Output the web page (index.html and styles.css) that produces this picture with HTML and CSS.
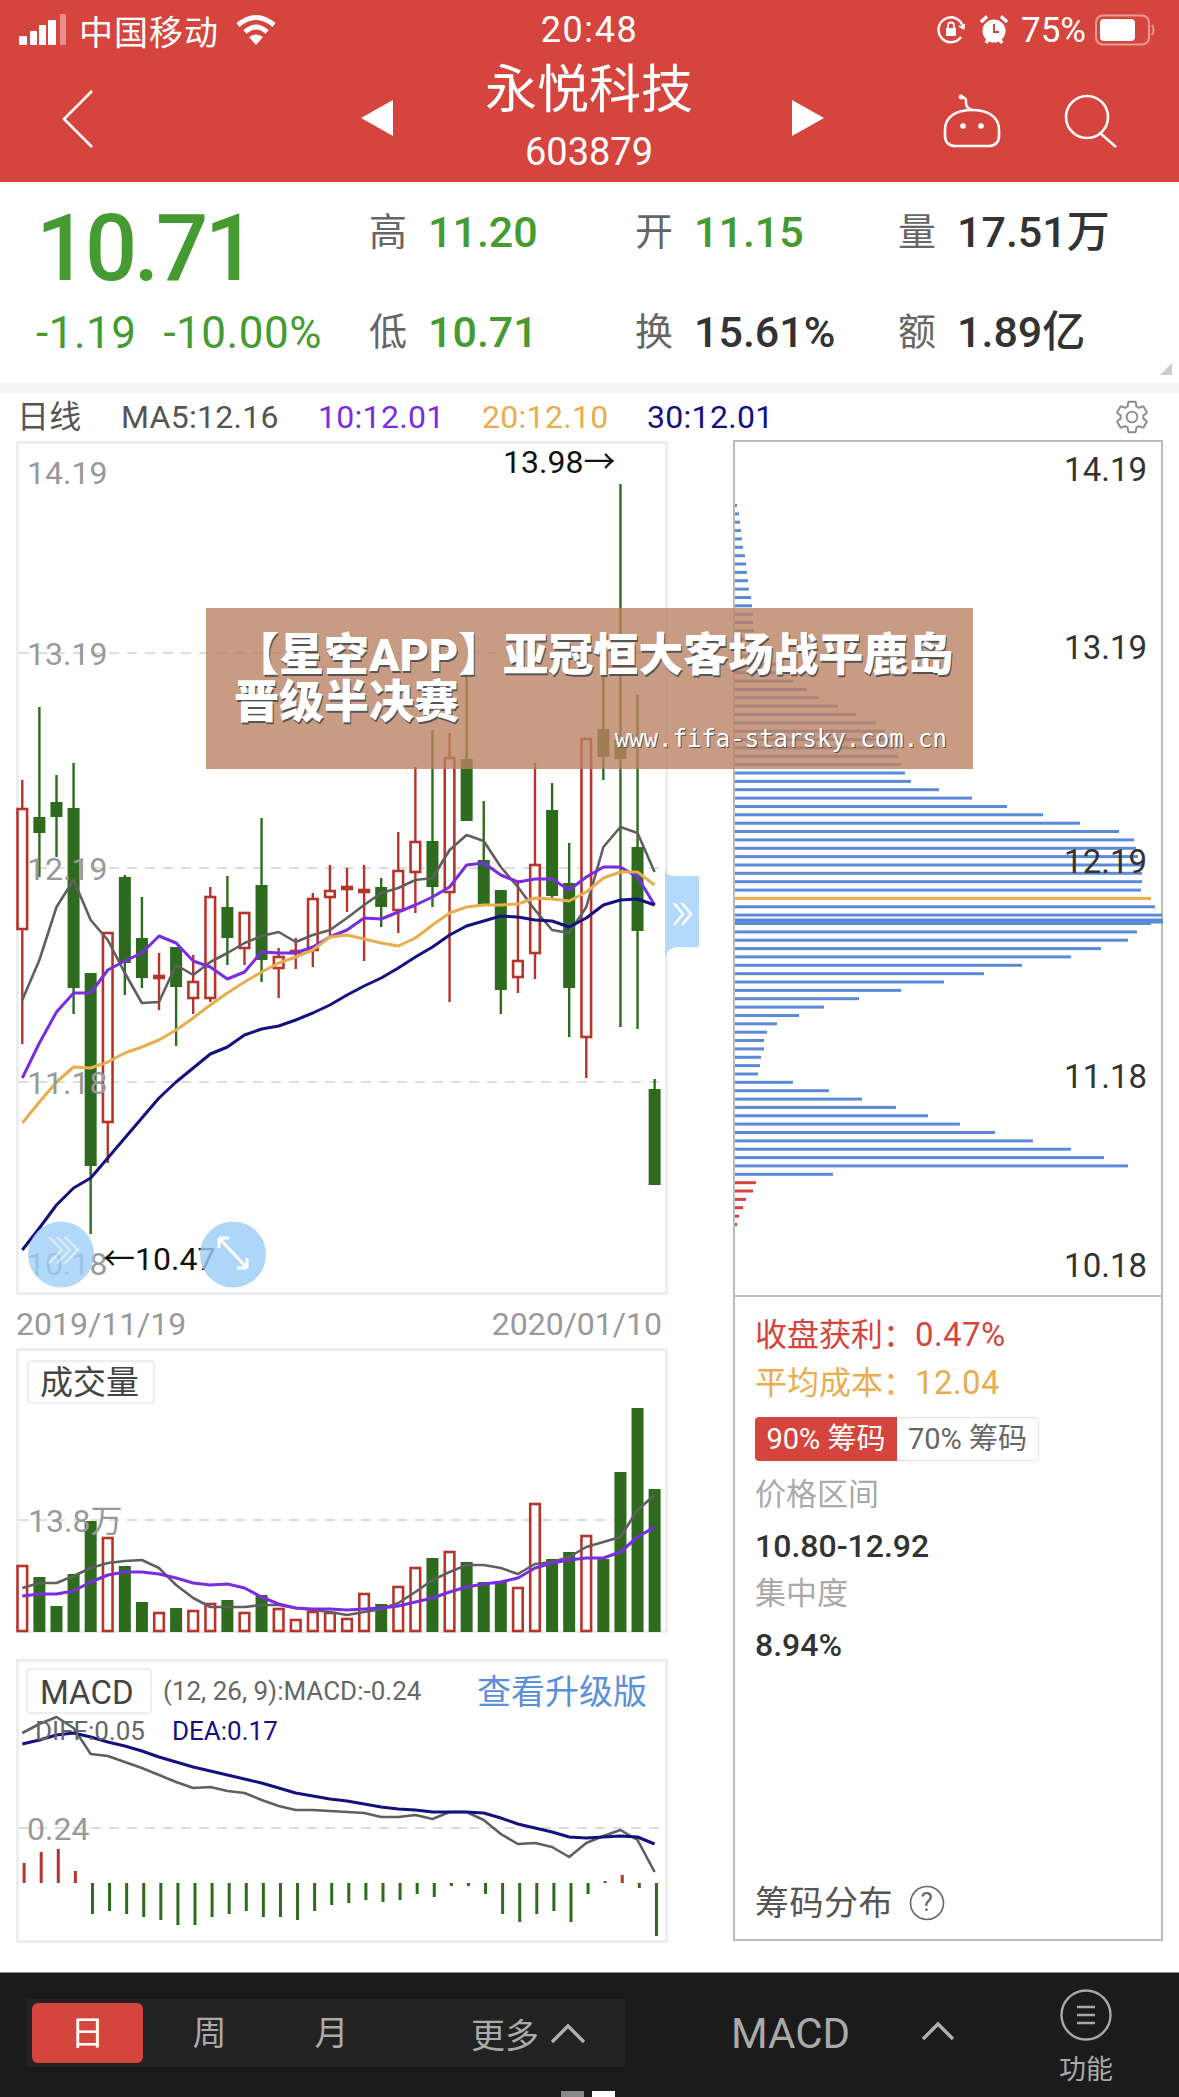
FILE: index.html
```html
<!DOCTYPE html>
<html lang="zh-CN">
<head>
  <meta charset="UTF-8">
  <meta name="viewport" content="width=device-width, initial-scale=1.0">
  <title>永悦科技 603879</title>
  <link rel="stylesheet" href="styles.css">
</head>
<body>
  <div class="page">
    <header class="header">
      <div class="status">
        <div class="status-left">
          <svg class="signal" width="50" height="32" viewBox="0 0 50 32">
            <rect x="0" y="22" width="8" height="9" rx="1" fill="#fff"/>
            <rect x="11" y="17" width="7" height="14" rx="1" fill="#fff"/>
            <rect x="20" y="11" width="7" height="20" rx="1" fill="#fff"/>
            <rect x="29" y="6" width="8" height="25" rx="1" fill="#fff"/>
            <rect x="41" y="0" width="6" height="31" rx="1" fill="#e98e88"/>
          </svg>
          <span class="carrier">中国移动</span>
          <svg width="42" height="32" viewBox="0 0 42 32" fill="none" stroke="#fff" stroke-width="5">
            <path d="M3 11 Q21 -4 39 11"/>
            <path d="M10 18 Q21 8 32 18"/>
            <path d="M21 31 L14 23 Q21 18 28 23 Z" fill="#fff" stroke="none"/>
          </svg>
        </div>
        <div class="clock">20:48</div>
        <div class="status-right">
          <svg width="28" height="28" viewBox="0 0 28 28" fill="none" stroke="#fff" stroke-width="2.4">
            <path d="M24 21 A12.4 12.4 0 1 1 26 11"/>
            <path d="M22 10 L26.5 12.5 L28 8" stroke-width="2"/>
            <rect x="9" y="12" width="10" height="8" fill="#fff" stroke="none"/>
            <path d="M11 12 V9.5 A3 3 0 0 1 17 9.5 V12" stroke-width="1.8"/>
          </svg>
          <svg width="28" height="30" viewBox="0 0 28 30">
            <circle cx="14" cy="16" r="11.5" fill="#fff"/>
            <path d="M1 7 L7 1.5 M27 7 L21 1.5 M6 28 L8 25 M22 28 L20 25" stroke="#fff" stroke-width="3.4"/>
            <path d="M14 9 V17 H19" stroke="#d5453e" stroke-width="2" fill="none"/>
          </svg>
          <span class="pct">75%</span>
          <svg width="60" height="32" viewBox="0 0 60 32">
            <rect x="1" y="1.5" width="53" height="29" rx="7" fill="none" stroke="#eb9a95" stroke-width="2"/>
            <rect x="5" y="5" width="35" height="22" rx="4" fill="#fff"/>
            <path d="M57 11 Q60 16 57 21" fill="none" stroke="#eb9a95" stroke-width="2"/>
          </svg>
        </div>
      </div>
      <nav class="nav">
        <svg class="back" width="32" height="58" viewBox="0 0 32 58" fill="none" stroke="#fff" stroke-width="2.6">
          <path d="M30 1 L2 29 L30 57"/>
        </svg>
        <svg class="arrow" width="32" height="36" viewBox="0 0 32 36"><path d="M32 0 V36 L0 18 Z" fill="#fff"/></svg>
        <div class="title">
          <div class="name">永悦科技</div>
          <div class="code">603879</div>
        </div>
        <svg class="arrow" width="32" height="36" viewBox="0 0 32 36"><path d="M0 0 V36 L32 18 Z" fill="#fff"/></svg>
        <svg class="robot" width="58" height="54" viewBox="0 0 58 54" fill="none" stroke="#fff" stroke-width="2.6">
          <path d="M19 3 Q24 4 23 9 Q23 14 29 16"/>
          <circle cx="18" cy="3" r="2.4" fill="#fff" stroke="none"/>
          <path d="M2 36 C2 22 14 16 29 16 C44 16 56 22 56 36 V42 C56 48 52 52 46 52 H12 C6 52 2 48 2 42 Z"/>
          <circle cx="20" cy="32" r="2.8" fill="#fff" stroke="none"/>
          <circle cx="38" cy="32" r="2.8" fill="#fff" stroke="none"/>
        </svg>
        <svg class="search" width="54" height="54" viewBox="0 0 54 54" fill="none" stroke="#fff" stroke-width="2.6">
          <circle cx="23" cy="23" r="21"/>
          <path d="M36 39 L52 53"/>
        </svg>
      </nav>
    </header>

    <section class="quote">
      <div class="price">
        <div class="last">10.71</div>
        <div class="change"><span>-1.19</span><span>-10.00%</span></div>
      </div>
      <div class="stats">
        <div class="stat"><span class="k">高</span><span class="v green">11.20</span></div>
        <div class="stat"><span class="k">开</span><span class="v green">11.15</span></div>
        <div class="stat"><span class="k">量</span><span class="v">17.51万</span></div>
        <div class="stat"><span class="k">低</span><span class="v green">10.71</span></div>
        <div class="stat"><span class="k">换</span><span class="v">15.61%</span></div>
        <div class="stat"><span class="k">额</span><span class="v">1.89亿</span></div>
      </div>
      <div class="corner"></div>
    </section>
    <div class="band"></div>

    <div class="ma-row">
      <span class="ma-name">日线</span>
      <span class="ma ma5">MA5:12.16</span>
      <span class="ma ma10">10:12.01</span>
      <span class="ma ma20">20:12.10</span>
      <span class="ma ma30">30:12.01</span>
      <svg class="gear" width="38" height="38" viewBox="0 0 24 24" fill="none" stroke="#8a8a8a" stroke-width="1.2">
        <path d="M19.14 12.94c.04-.3.06-.61.06-.94 0-.32-.02-.64-.07-.94l2.03-1.58a.49.49 0 0 0 .12-.61l-1.92-3.32a.488.488 0 0 0-.59-.22l-2.39.96c-.5-.38-1.03-.7-1.62-.94l-.36-2.54a.484.484 0 0 0-.48-.41h-3.84c-.24 0-.43.17-.47.41l-.36 2.54c-.59.24-1.13.57-1.62.94l-2.39-.96c-.22-.08-.47 0-.59.22L2.74 8.87c-.12.21-.08.47.12.61l2.03 1.58c-.05.3-.09.63-.09.94s.02.64.07.94l-2.03 1.58a.49.49 0 0 0-.12.61l1.92 3.32c.12.22.37.29.59.22l2.39-.96c.5.38 1.03.7 1.62.94l.36 2.54c.05.24.24.41.48.41h3.84c.24 0 .44-.17.47-.41l.36-2.54c.59-.24 1.13-.56 1.62-.94l2.39.96c.22.08.47 0 .59-.22l1.92-3.32c.12-.22.07-.47-.12-.61l-2.01-1.58z"/>
        <circle cx="12" cy="12" r="3.4"/>
      </svg>
    </div>

    <main class="body">
      <div class="left">
        <div class="frame frame-k"><svg id="kline" viewBox="19 444 646 848"></svg></div>
        <div class="dates"><span>2019/11/19</span><span>2020/01/10</span></div>
        <div class="frame frame-vol"><svg id="vol" viewBox="19 1351 646 279"></svg></div>
        <div class="frame frame-macd"><svg id="macd" viewBox="19 1662 646 278"></svg></div>
      </div>
      <div class="right">
        <div class="chips"><svg id="chips" viewBox="735 442 426 852"></svg></div>
        <div class="info">
          <div class="row red"><span class="row-k">收盘获利：</span><span class="row-v">0.47%</span></div>
          <div class="row yellow"><span class="row-k">平均成本：</span><span class="row-v">12.04</span></div>
          <div class="toggle"><span class="toggle-on">90% 筹码</span><span class="toggle-off">70% 筹码</span></div>
          <div class="info-k first">价格区间</div>
          <div class="info-v">10.80-12.92</div>
          <div class="info-k">集中度</div>
          <div class="info-v">8.94%</div>
          <div class="info-foot">
            <span>筹码分布</span>
            <svg width="36" height="36" viewBox="0 0 36 36">
              <circle cx="18" cy="18" r="16.5" fill="none" stroke="#666" stroke-width="1.6"/>
              <text x="18" y="26" text-anchor="middle" class="help">?</text>
            </svg>
          </div>
        </div>
      </div>
    </main>

    <footer class="bar">
      <div class="tabs">
        <span class="tab tab-on">日</span>
        <span class="tab">周</span>
        <span class="tab">月</span>
        <span class="tab-more">更多
          <svg width="36" height="22" viewBox="0 0 36 22" fill="none" stroke="#b0b0b0" stroke-width="3.4"><path d="M2 20 L18 4 L34 20"/></svg>
        </span>
      </div>
      <div class="bar-macd">MACD</div>
      <svg class="bar-caret" width="34" height="20" viewBox="0 0 34 20" fill="none" stroke="#b0b0b0" stroke-width="3.4"><path d="M2 18 L17 3 L32 18"/></svg>
      <div class="func">
        <svg width="52" height="52" viewBox="0 0 52 52" fill="none" stroke="#a8a8a8" stroke-width="2.4">
          <circle cx="26" cy="26" r="24.5"/>
          <path d="M17 18 H35 M17 26 H35 M17 34 H35"/>
        </svg>
        <span>功能</span>
      </div>
      <i class="bit bit-grey"></i><i class="bit bit-white"></i>
    </footer>

    <div class="banner">
      <div class="banner-title">【星空APP】亚冠恒大客场战平鹿岛晋级半决赛</div>
      <div class="banner-url">www.fifa-starsky.com.cn</div>
    </div>
  </div>
  <script src="chart.js"></script>
</body>
</html>
```

FILE: styles.css
```css
html, body {
  margin: 0;
  padding: 0;
  background: white;
}
.page {
  position: relative;
  width: 1179px;
  height: 2097px;
  overflow: hidden;
  background: white;
  color: #333;
  font-family: Roboto, "Noto Sans CJK SC", sans-serif;
}

/* header */
.header {
  height: 182px;
  background: #d5453e;
  color: white;
}
.status {
  height: 60px;
  display: flex;
  align-items: center;
  justify-content: space-between;
  padding: 0 24px 0 19px;
  position: relative;
}
.status-left, .status-right {
  display: flex;
  align-items: center;
}
.carrier {
  font-size: 34px;
  margin: 0 16px 0 10px;
  letter-spacing: 1px;
}
.clock {
  position: absolute;
  left: 0;
  right: 0;
  text-align: center;
  font-size: 36px;
  letter-spacing: 1.6px;
}
.status-right {
  gap: 15px;
}
.pct {
  font-size: 35px;
  margin: 0 -6px 0 -2px;
}
.nav {
  height: 122px;
  display: flex;
  align-items: center;
  padding-left: 62px;
}
.back {
  margin: -4px 267px 0 0;
}
.arrow {
  margin-top: -6px;
}
.title {
  box-sizing: border-box;
  width: 399px;
  padding-right: 7px;
  text-align: center;
  margin-top: -6px;
}
.name {
  font-size: 52px;
  line-height: 60px;
}
.code {
  font-size: 38px;
  line-height: 46px;
  margin-top: 8px;
}
.robot {
  margin: 0 0 0 119px;
}
.search {
  margin: 0 0 0 63px;
}

/* quote */
.quote {
  position: relative;
  height: 201px;
  display: flex;
}
.price {
  width: 369px;
  padding-left: 36px;
  box-sizing: border-box;
  color: #459b32;
}
.last {
  height: 126px;
  line-height: 134px;
  font-size: 92px;
  font-weight: 500;
  letter-spacing: -3.4px;
}
.change {
  display: flex;
  gap: 27px;
  font-size: 44px;
  line-height: 50px;
  letter-spacing: 0.5px;
}
.stats {
  display: grid;
  grid-template-columns: 266px 263px 266px;
  grid-auto-rows: 100px;
  align-items: center;
}
.stat {
  display: flex;
  align-items: center;
  gap: 21px;
}
.k {
  font-size: 38px;
  line-height: 50px;
  color: #666;
}
.v {
  font-size: 43px;
  line-height: 50px;
  font-weight: 500;
  color: #333;
}
.green {
  color: #459b32;
}
.corner {
  position: absolute;
  right: 7px;
  bottom: 8px;
  width: 0;
  height: 0;
  border-left: 12px solid transparent;
  border-bottom: 12px solid #ccc;
}
.band {
  height: 10px;
  background: #f3f3f3;
}
.ma-row {
  height: 48px;
  display: flex;
  align-items: center;
  font-size: 32px;
  line-height: 40px;
  letter-spacing: 0.3px;
  padding-left: 17px;
}
.ma-name {
  width: 104px;
  color: #555;
}
.ma {
  width: 200px;
  color: #555;
}
.ma5 { width: 197px; }
.ma10 { width: 164px; color: #7a2de0; }
.ma20 { width: 165px; color: #e8ad4f; }
.ma30 { width: 469px; color: #14107f; }
.gear {
  position: relative;
  left: -3px;
}

/* chart columns */
.body {
  display: flex;
  height: 1531px;
  padding-left: 16px;
  gap: 65px;
}
.left {
  width: 652px;
}
.frame {
  box-sizing: border-box;
  border: 3px solid #eee;
}
.frame svg {
  display: block;
  width: 100%;
  height: 100%;
  overflow: visible;
}
.frame-k {
  height: 854px;
}
.dates {
  height: 53px;
  display: flex;
  justify-content: space-between;
  align-items: center;
  padding: 5px 6px 0 0;
  box-sizing: border-box;
  font-size: 32px;
  color: #999;
}
.frame-vol {
  height: 285px;
}
.frame-macd {
  height: 284px;
  margin-top: 26px;
}
.right {
  box-sizing: border-box;
  width: 430px;
  height: 1501px;
  margin-top: -1px;
  border: 2px solid #bbb;
  display: flex;
  flex-direction: column;
}
.chips {
  height: 853px;
  border-bottom: 2px solid #bbb;
}
.chips svg {
  display: block;
  width: 100%;
  height: 100%;
  overflow: visible;
}
.info {
  flex: 1;
  display: flex;
  flex-direction: column;
  padding: 14px 0 12px 20px;
}
.row {
  height: 48px;
  line-height: 48px;
  font-size: 32px;
  display: flex;
}
.row-k {
  width: 160px;
}
.row-v {
  font-size: 33px;
  letter-spacing: 0.4px;
}
.red { color: #d5443d; }
.yellow { color: #e8ad4f; }
.toggle {
  display: flex;
  width: 284px;
  height: 44px;
  margin-top: 10px;
  font-size: 29px;
  line-height: 44px;
  text-align: center;
}
.toggle-on {
  width: 142px;
  background: #d5443d;
  color: white;
  border-radius: 4px 0 0 4px;
}
.toggle-off {
  box-sizing: border-box;
  width: 142px;
  color: #666;
  border: 1px solid #e4e4e4;
  border-left: 0;
  border-radius: 0 4px 4px 0;
  line-height: 42px;
}
.info-k {
  height: 48px;
  line-height: 48px;
  font-size: 31px;
  color: #aaa;
}
.info-k.first {
  margin-top: 10px;
}
.info-v {
  height: 48px;
  line-height: 48px;
  margin-top: 3px;
  font-size: 32px;
  font-weight: 500;
  color: #333;
}
.info-foot {
  margin-top: auto;
  display: flex;
  align-items: center;
  gap: 16px;
  font-size: 34px;
  line-height: 48px;
  letter-spacing: 0.5px;
  color: #555;
}
.help {
  font-size: 26px;
  fill: #666;
}

/* bottom bar */
.bar {
  position: relative;
  height: 125px;
  background: #1b1b1b;
  border-top: 1px solid #888;
  box-sizing: border-box;
  display: flex;
  align-items: center;
  color: #aaa;
  padding-left: 27px;
}
.tabs {
  width: 598px;
  height: 68px;
  margin-top: -4px;
  background: #222;
  display: flex;
  align-items: center;
  font-size: 34px;
  box-sizing: border-box;
  padding-left: 5px;
}
.tab {
  width: 111px;
  height: 60px;
  line-height: 60px;
  margin-right: 11px;
  text-align: center;
  border-radius: 6px;
}
.tab-on {
  background: #d5443d;
  color: white;
}
.tab-more {
  margin-left: 73px;
  display: flex;
  align-items: center;
  gap: 11px;
}
.bar-macd {
  font-size: 42px;
  margin: -4px 0 0 106px;
  width: 190px;
}
.bar-caret {
  margin-top: -8px;
}
.func {
  display: flex;
  flex-direction: column;
  align-items: center;
  margin: 6px 0 0 104px;
  font-size: 27px;
  line-height: 36px;
  gap: 11px;
}
.bit {
  position: absolute;
  bottom: 0;
  width: 23px;
  height: 6px;
}
.bit-grey {
  left: 561px;
  background: #888;
}
.bit-white {
  left: 592px;
  background: white;
}

/* ad over the chart */
.banner {
  position: absolute;
  left: 206px;
  top: 608px;
  width: 767px;
  height: 161px;
  box-sizing: border-box;
  padding: 24px 8px 0 28px;
  background: rgba(187, 130, 99, 0.8);
  color: white;
}
.banner-title {
  font-size: 45px;
  line-height: 47px;
  font-weight: 900;
  text-shadow: 1px 2px 0 #555;
}
.banner-url {
  font-family: "DejaVu Sans Mono", monospace;
  font-size: 24px;
  line-height: 24px;
  margin-top: 1px;
  padding-right: 18px;
  text-align: right;
  text-shadow: 1px 1px 0 #555;
}

/* svg chart bits */
.lbl {
  font-size: 32px;
  fill: #999;
}
.lbl-dark {
  font-size: 33px;
  fill: #333;
}
.ext {
  font-size: 32px;
  fill: #111;
}
.tag {
  fill: white;
  stroke: #eee;
  stroke-width: 2;
}
.tag-text {
  font-size: 33px;
  fill: #444;
}
.macd-param {
  font-size: 26px;
  fill: #666;
}
.macd-dea {
  font-size: 26px;
  fill: #14107f;
}
.macd-link {
  font-size: 34px;
  fill: #5b8fd8;
}
.grid {
  stroke: #ddd;
  stroke-width: 2;
  stroke-dasharray: 10 8;
}
```

FILE: chart.js
```js
const SVG_GREEN = "#2e6b1f";
const SVG_RED = "#b5352c";

function xAt(i) {
  return 22.3 + i * 17.09;
}

function line(values, color, width) {
  const pts = values.map((y, i) => xAt(i).toFixed(1) + "," + y).join(" ");
  return `<polyline points="${pts}" fill="none" stroke="${color}" stroke-width="${width}" stroke-linejoin="round"/>`;
}

function gridLine(y) {
  return `<line class="grid" x1="19" x2="665" y1="${y}" y2="${y}"/>`;
}

// [wickTop, bodyTop, bodyBottom, wickBottom, up]
const candles = [
  [780, 809, 929, 1044, 1], [707, 817, 833, 877, 0], [775, 802, 817, 857, 0], [763, 808, 988, 1014, 0],
  [973, 973, 1166, 1234, 0], [933, 933, 1122, 1163, 1], [875, 877, 963, 995, 0], [897, 938, 978, 988, 0],
  [953, 976, 978, 1010, 1], [947, 947, 987, 1046, 0], [955, 982, 998, 1014, 1], [887, 897, 998, 1002, 1],
  [876, 907, 938, 965, 0], [913, 913, 948, 965, 1], [818, 885, 960, 982, 0], [948, 957, 968, 998, 1],
  [938, 951, 953, 969, 1], [893, 899, 950, 967, 1], [865, 891, 897, 937, 1], [868, 887, 889, 912, 1],
  [865, 890, 892, 961, 1], [878, 887, 907, 927, 0], [832, 871, 910, 933, 1], [767, 842, 872, 913, 1],
  [730, 841, 887, 907, 0], [733, 758, 892, 1002, 1], [673, 759, 821, 821, 0], [801, 860, 905, 905, 0],
  [890, 890, 990, 1014, 0], [880, 961, 977, 993, 1], [763, 865, 953, 979, 1], [783, 810, 896, 900, 0],
  [843, 883, 988, 1037, 0], [739, 739, 1037, 1078, 1], [675, 729, 757, 780, 0], [484, 740, 759, 1027, 0],
  [695, 847, 931, 1029, 0], [1079, 1089, 1185, 1185, 0]
];

const ma5 = [1000, 960, 907, 880, 920, 940, 973, 1003, 1002, 965, 975, 962, 953, 943, 936, 932, 942, 935, 930, 918, 905, 893, 888, 880, 878, 850, 835, 841, 867, 887, 910, 930, 933, 907, 847, 827, 833, 872];
const ma10 = [1078, 1043, 1012, 993, 993, 970, 961, 953, 936, 943, 961, 967, 979, 972, 952, 953, 953, 947, 937, 930, 918, 919, 912, 905, 897, 887, 865, 863, 875, 882, 879, 879, 890, 877, 867, 867, 877, 905];
const ma20 = [1123, 1102, 1082, 1067, 1068, 1062, 1053, 1047, 1040, 1030, 1018, 1005, 993, 982, 972, 963, 957, 950, 937, 935, 939, 943, 946, 938, 925, 913, 907, 905, 905, 904, 898, 899, 901, 892, 878, 872, 872, 885];
const ma30 = [1250, 1228, 1205, 1188, 1178, 1158, 1138, 1118, 1098, 1082, 1068, 1054, 1047, 1035, 1029, 1026, 1020, 1013, 1005, 995, 986, 978, 968, 957, 947, 935, 926, 921, 916, 917, 920, 921, 927, 918, 905, 900, 899, 905];

function drawKline() {
  let s = "";
  [653, 868, 1082].forEach(y => { s += gridLine(y); });
  candles.forEach((c, i) => {
    const x = xAt(i);
    const color = c[4] ? SVG_RED : SVG_GREEN;
    s += `<line x1="${x}" x2="${x}" y1="${c[0]}" y2="${c[3]}" stroke="${color}" stroke-width="2.4"/>`;
    if (c[4]) {
      s += `<rect x="${x - 4.8}" y="${c[1]}" width="9.6" height="${c[2] - c[1]}" fill="white" stroke="${color}" stroke-width="2.6"/>`;
    } else {
      s += `<rect x="${x - 6}" y="${c[1]}" width="12" height="${c[2] - c[1]}" fill="${color}"/>`;
    }
  });
  s += line(ma5, "#5f5f5f", 2.6);
  s += line(ma10, "#7a2de0", 3);
  s += line(ma20, "#e8ad4f", 3);
  s += line(ma30, "#14107f", 3);
  [["14.19", 472], ["13.19", 653], ["12.19", 868], ["11.18", 1082], ["10.18", 1263]].forEach(l => {
    s += `<text class="lbl" x="27" y="${l[1]}" dy=".36em">${l[0]}</text>`;
  });
  s += `<text class="ext" x="503" y="461" dy=".36em">13.98→</text>`;
  s += `<text class="ext" x="103" y="1258" dy=".36em">←10.47</text>`;
  // round buttons and the side handle sit on top of the chart
  s += `<circle cx="61" cy="1254.5" r="33" fill="#9ccdf8" fill-opacity=".78"/>`;
  s += `<path d="M49 1237 L62 1250 L49 1263 M57 1237 L70 1250 L57 1263 M65 1237 L78 1250 L65 1263" fill="none" stroke="white" stroke-opacity=".6" stroke-width="2"/>`;
  s += `<circle cx="233" cy="1254.5" r="33" fill="#9ccdf8" fill-opacity=".82"/>`;
  s += `<path d="M219 1238 L247 1268 M219 1238 H229 M219 1238 V1248 M247 1268 H237 M247 1268 V1258" fill="none" stroke="white" stroke-width="3"/>`;
  s += `<path d="M665 870 Q667 876 675 876 H699 V947 H680 Q667 947 665 958 Z" fill="#b3d9fb"/>`;
  s += `<path d="M674 903 L683 914 L674 925 M682 903 L691 914 L682 925" fill="none" stroke="white" stroke-width="2.6"/>`;
  document.getElementById("kline").innerHTML = s;
}

const volTops = [1566, 1577, 1606, 1574, 1521, 1538, 1566, 1602, 1613, 1608, 1611, 1604, 1600, 1613, 1595, 1609, 1620, 1612, 1613, 1619, 1594, 1604, 1587, 1568, 1558, 1552, 1562, 1582, 1582, 1588, 1504, 1559, 1552, 1536, 1559, 1472, 1408, 1489];
const volMa5 = [1588, 1583, 1583, 1576, 1568, 1563, 1561, 1560, 1568, 1585, 1598, 1607, 1607, 1607, 1605, 1605, 1608, 1610, 1612, 1615, 1612, 1609, 1603, 1592, 1580, 1572, 1565, 1565, 1568, 1574, 1564, 1562, 1557, 1547, 1542, 1537, 1510, 1495];
const volMa10 = [1596, 1594, 1594, 1591, 1582, 1575, 1572, 1572, 1574, 1578, 1583, 1585, 1584, 1588, 1597, 1604, 1608, 1609, 1609, 1610, 1609, 1608, 1606, 1602, 1598, 1592, 1587, 1584, 1582, 1578, 1568, 1563, 1560, 1558, 1558, 1552, 1537, 1527];

function drawVol() {
  const bottom = 1632;
  let s = gridLine(1520);
  volTops.forEach((top, i) => {
    const x = xAt(i);
    if (candles[i][4]) {
      s += `<rect x="${x - 4.8}" y="${top}" width="9.6" height="${bottom - top - 1}" fill="white" stroke="${SVG_RED}" stroke-width="2.6"/>`;
    } else {
      s += `<rect x="${x - 6}" y="${top}" width="12" height="${bottom - top}" fill="${SVG_GREEN}"/>`;
    }
  });
  s += line(volMa5, "#5f5f5f", 2.6);
  s += line(volMa10, "#7a2de0", 3);
  s += `<rect class="tag" x="28" y="1361" width="126" height="42" rx="3"/>`;
  s += `<text class="tag-text" x="40" y="1382" dy=".36em">成交量</text>`;
  s += `<text class="lbl" x="28" y="1520" dy=".36em">13.8万</text>`;
  document.getElementById("vol").innerHTML = s;
}

const diff = [1733, 1724, 1717, 1728, 1754, 1756, 1762, 1768, 1775, 1782, 1788, 1787, 1791, 1793, 1800, 1806, 1810, 1810, 1811, 1812, 1813, 1817, 1817, 1815, 1819, 1812, 1812, 1820, 1834, 1844, 1843, 1847, 1857, 1843, 1836, 1830, 1840, 1872];
const dea = [1744, 1740, 1735, 1733, 1737, 1742, 1746, 1751, 1757, 1762, 1767, 1771, 1775, 1779, 1783, 1788, 1793, 1796, 1799, 1801, 1804, 1807, 1809, 1810, 1812, 1812, 1812, 1813, 1818, 1824, 1828, 1832, 1837, 1838, 1837, 1836, 1837, 1844];
// positive goes up (red), negative goes down (green), from the zero line
const hist = [20, 31, 34, 12, -31, -28, -31, -34, -37, -42, -42, -34, -31, -28, -34, -34, -37, -28, -22, -20, -17, -19, -17, -11, -14, -3, -3, -11, -31, -39, -31, -28, -39, -11, 2, 8, -5, -53];

function drawMacd() {
  const zero = 1883;
  let s = gridLine(1828);
  hist.forEach((h, i) => {
    const x = xAt(i) + 1.8;
    const y = h > 0 ? zero - h : zero;
    s += `<rect x="${x - 1.5}" y="${y}" width="3" height="${Math.abs(h)}" fill="${h > 0 ? SVG_RED : SVG_GREEN}"/>`;
  });
  s += line(diff, "#5f5f5f", 2.6);
  s += line(dea, "#14107f", 3);
  s += `<rect class="tag" x="27" y="1669" width="124" height="44" rx="3"/>`;
  s += `<text class="tag-text" x="40" y="1692" dy=".36em">MACD</text>`;
  s += `<text class="macd-param" x="163" y="1691" dy=".36em">(12, 26, 9):MACD:-0.24</text>`;
  s += `<text class="macd-link" x="477" y="1692" dy=".36em">查看升级版</text>`;
  s += `<text class="macd-param" x="35" y="1731" dy=".36em">DIFF:0.05</text>`;
  s += `<text class="macd-dea" x="172" y="1731" dy=".36em">DEA:0.17</text>`;
  s += `<text class="lbl" x="27" y="1828" dy=".36em">0.24</text>`;
  document.getElementById("macd").innerHTML = s;
}

const chipLens = [2, 4, 5, 6, 7, 8, 10, 11, 12, 13, 14, 16, 17, 18, 18, 19, 22, 26, 32, 44, 50, 58, 72, 84, 103, 121, 141, 150, 155, 159, 163, 166, 170, 176, 204, 237, 272, 308, 345, 384, 399, 401, 403, 407, 407, 407, 406, 416, 420, 427, 416, 402, 393, 366, 336, 287, 249, 209, 166, 124, 89, 64, 42, 32, 29, 29, 26, 25, 23, 58, 94, 127, 161, 193, 225, 260, 298, 336, 369, 393, 98, 21, 18, 11, 8, 4, 2];

function drawChips() {
  let s = "";
  chipLens.forEach((len, i) => {
    const y = 503.5 + i * 8.36;
    let color = "#5b8bd8";
    if (i === 47) color = "#e8ad4f";
    if (i > 80) color = "#d5443d";
    s += `<rect x="735" y="${y.toFixed(1)}" width="${len}" height="3" fill="${color}"/>`;
  });
  s += `<rect x="735" y="918" width="428" height="5" fill="#5b8bd8"/>`;
  [["14.19", 469], ["13.19", 647], ["12.19", 861], ["11.18", 1076], ["10.18", 1265]].forEach(l => {
    s += `<text class="lbl-dark" x="1147" y="${l[1]}" dy=".36em" text-anchor="end">${l[0]}</text>`;
  });
  document.getElementById("chips").innerHTML = s;
}

drawKline();
drawVol();
drawMacd();
drawChips();
```
